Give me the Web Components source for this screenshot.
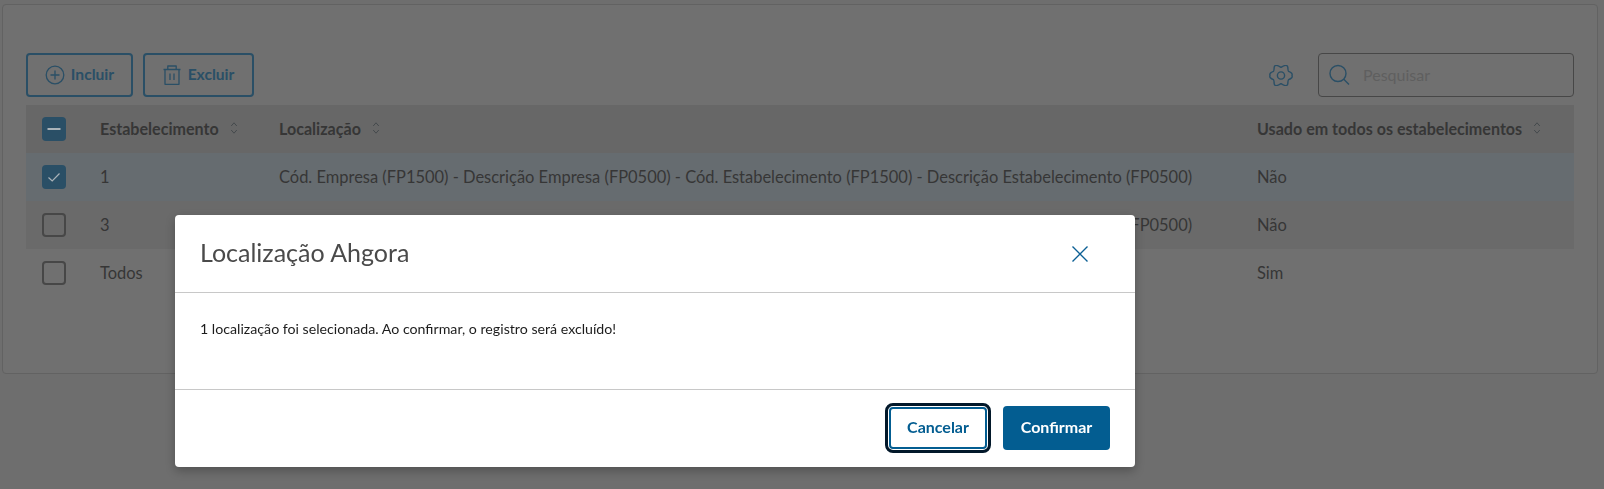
<!DOCTYPE html>
<html lang="pt-BR"><head><meta charset="utf-8"><title>Localização Ahgora</title>
<style>
html,body{margin:0;height:100%;overflow:hidden}
body{background:#6e6e6e;font-family:Lato,"Noto Sans",sans-serif;font-size:16px;color:#363636}
</style></head><body>
<app-page></app-page>
<script>
const P={blue:'#2a4f66',border:'#474747'};
const sortIcon=`<svg width="8" height="14" viewBox="0 0 8 14" fill="none" stroke="#454a4d" stroke-width="1"><path d="M1.2 5 4 1.8 6.8 5M1.2 9 4 12.2 6.8 9"/></svg>`;
const icons={
 plus:`<svg width="20" height="20" viewBox="0 0 20 20" fill="none" stroke="currentColor" stroke-width="1.3"><circle cx="10" cy="10" r="8.8"/><path d="M10 5.5v9M5.5 10h9"/></svg>`,
 trash:`<svg width="18" height="20" viewBox="0 0 18 20" fill="none" stroke="currentColor" stroke-width="1.3" stroke-linejoin="round"><path d="M.5 4.5h17M4.8 4.5V1h8.4v3.5M2 4.5v14.8h14V4.5M7 8.5v6.5M11 8.5v6.5"/></svg>`
};
customElements.define('tool-button',class extends HTMLElement{connectedCallback(){
 this.attachShadow({mode:'open'}).innerHTML=`<style>:host{display:inline-flex;align-items:center;justify-content:center;box-sizing:border-box;height:44px;gap:${this.getAttribute('gap')}px;border:2px solid ${P.blue};border-radius:4px;color:${P.blue};font-weight:700;font-size:15.6px;width:${this.getAttribute('w')}px}svg{display:block}span{padding-bottom:2px}</style>${icons[this.getAttribute('icon')]}<span><slot></slot></span>`;}});
customElements.define('check-box',class extends HTMLElement{connectedCallback(){
 const s=this.getAttribute('state');
 const inner=s==='mixed'?`<svg width="20" height="20" viewBox="0 0 20 20"><path d="M3.5 10h13" stroke="#aab3b9" stroke-width="2"/></svg>`:s==='on'?`<svg width="20" height="20" viewBox="0 0 20 20" fill="none"><path d="M4.5 10.5 8.2 14 15.5 6.5" stroke="#aab3b9" stroke-width="1.2"/></svg>`:'';
 this.attachShadow({mode:'open'}).innerHTML=`<style>:host{display:flex;align-items:center;justify-content:center;box-sizing:border-box;width:24px;height:24px;border-radius:4px;${s?`background:${P.blue}`:`border:2px solid ${P.border}`}}</style>${inner}`;}});
customElements.define('table-row',class extends HTMLElement{connectedCallback(){
 const h=this.hasAttribute('head');const bg=this.getAttribute('bg')||'transparent';
 this.attachShadow({mode:'open'}).innerHTML=`<style>:host{display:grid;grid-template-columns:74px 179px 978px 1fr;height:48px;align-items:center;background:${bg};color:#363636;font-size:${h?'16.1px':'16.47px'};${h?'font-weight:700;':''}white-space:nowrap}.c{padding-left:16px}slot:not([name])::slotted(*){padding-bottom:${h?2:0}px}</style><div class="c"><slot name="check"></slot></div><slot></slot>`;}});
customElements.define('sort-label',class extends HTMLElement{connectedCallback(){
 this.attachShadow({mode:'open'}).innerHTML=`<style>:host{display:flex;align-items:center;gap:11px}svg{display:block}</style><span><slot></slot></span>${sortIcon}`;}});
customElements.define('search-box',class extends HTMLElement{connectedCallback(){
 this.attachShadow({mode:'open'}).innerHTML=`<style>:host{display:flex;align-items:center;box-sizing:border-box;width:256px;height:44px;border:1px solid #474747;border-radius:4px;padding-left:9px;gap:13px;color:#5f5f5f;font-size:16px}svg{display:block}span{padding-bottom:2px}</style><svg width="22" height="24" viewBox="0 0 22 24" fill="none" stroke="${P.blue}" stroke-width="1.4"><circle cx="10" cy="10.5" r="8"/><path d="M15.8 16.3 21 21.5"/></svg><span><slot></slot></span>`;}});
customElements.define('gear-icon',class extends HTMLElement{connectedCallback(){
 this.attachShadow({mode:'open'}).innerHTML=`<style>:host{display:block;width:24px;height:21px;color:${P.blue}}svg{display:block}</style><svg width="24" height="21" viewBox="0 0 24 21" fill="none" stroke="currentColor" stroke-width="1.4" stroke-linejoin="round"><circle cx="12" cy="10.5" r="3.6"/><path d="M12 2.4Q18-1.5 18.8 2.2 19 6 19.6 6.3 24 8 23 10.5 24 13 19.6 14.7 19 15 18.8 18.8 18 22.5 12 18.6 6 22.5 5.2 18.8 5 15 4.4 14.7 0 13 1 10.5 0 8 4.4 6.3 5 6 5.2 2.2 6-1.5 12 2.4Z"/></svg>`;}});
customElements.define('modal-dialog',class extends HTMLElement{connectedCallback(){
 this.attachShadow({mode:'open'}).innerHTML=`<style>
 :host{position:fixed;left:175px;top:215px;width:960px;height:252px;box-sizing:border-box;background:#fff;border-radius:4px;box-shadow:0 4px 10px rgba(0,0,0,.25);display:flex;flex-direction:column;color:#1c1c1c}
 header{height:78px;box-sizing:border-box;border-bottom:1px solid #c8c8c8;display:flex;align-items:center;justify-content:space-between;padding:0 46px 0 25px;font-size:25px;color:#4a4a4a}
 header span{padding-bottom:3px}
 main{height:97px;box-sizing:border-box;border-bottom:1px solid #c8c8c8;padding:26px 25px 0;font-size:14.2px;line-height:20px}
 footer{flex:1;display:flex;justify-content:flex-end;align-items:center;gap:17px;padding:0 25px 2px 0}
 svg{display:block}
 </style><header><span><slot name="title"></slot></span><svg width="18" height="18" viewBox="0 0 18 18" fill="none" stroke="#0b5f94" stroke-width="1.4"><path d="M1.5 1.5l15 15M16.5 1.5l-15 15"/></svg></header><main><slot></slot></main><footer><slot name="actions"></slot></footer>`;}});
customElements.define('action-button',class extends HTMLElement{connectedCallback(){
 const p=this.hasAttribute('primary');
 this.attachShadow({mode:'open'}).innerHTML=`<style>:host{display:flex;align-items:center;justify-content:center;box-sizing:border-box;height:44px;border-radius:4px;font-weight:700;font-size:16px;${p?'width:107px;background:#035d91;color:#fff':'width:98px;height:42px;margin:0 -1px;background:#fff;color:#035d91;border:2px solid #035d91;outline:3px solid #02182a;outline-offset:1px'}}span{padding-bottom:2px}</style><span><slot></slot></span>`;}});
customElements.define('app-page',class extends HTMLElement{connectedCallback(){
 this.attachShadow({mode:'open'}).innerHTML=`<style>
 :host{display:block;padding:4px 6px 0 2px}
 .card{box-sizing:border-box;height:370px;border:1px solid #626262;border-radius:4px;background:#707070;padding:48px 23px 0 23px}
 .bar{display:flex;align-items:center;gap:10px;height:44px;margin-bottom:8px}
 .sp{flex:1}
 gear-icon{margin-right:15px}
 </style><div class="card">
 <div class="bar"><tool-button icon="plus" w="107" gap="6">Incluir</tool-button><tool-button icon="trash" w="111" gap="7">Excluir</tool-button><div class="sp"></div><gear-icon></gear-icon><search-box>Pesquisar</search-box></div>
 <table-row head bg="#676767"><check-box slot="check" state="mixed"></check-box><sort-label>Estabelecimento</sort-label><sort-label>Localização</sort-label><sort-label>Usado em todos os estabelecimentos</sort-label></table-row>
 <table-row bg="#666c70"><check-box slot="check" state="on"></check-box><div>1</div><div>Cód. Empresa (FP1500) - Descrição Empresa (FP0500) - Cód. Estabelecimento (FP1500) - Descrição Estabelecimento (FP0500)</div><div>Não</div></table-row>
 <table-row bg="#6a6a6a"><check-box slot="check"></check-box><div>3</div><div>Cód. Empresa (FP1500) - Descrição Empresa (FP0500) - Cód. Estabelecimento (FP1500) - Descrição Estabelecimento (FP0500)</div><div>Não</div></table-row>
 <table-row><check-box slot="check"></check-box><div>Todos</div><div></div><div>Sim</div></table-row>
 </div>
 <modal-dialog><span slot="title">Localização Ahgora</span>1 localização foi selecionada. Ao confirmar, o registro será excluído!<action-button slot="actions">Cancelar</action-button><action-button slot="actions" primary>Confirmar</action-button></modal-dialog>`;}});
</script></body></html>
